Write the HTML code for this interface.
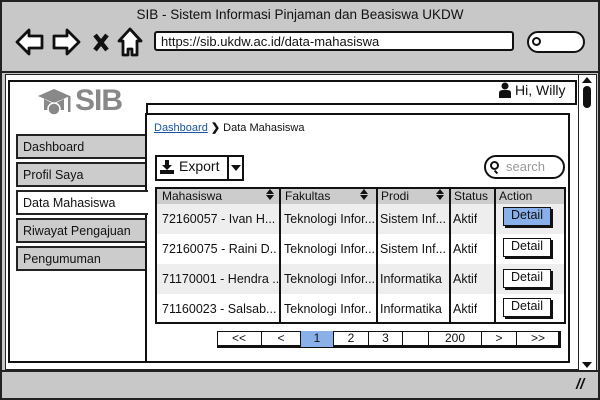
<!DOCTYPE html><html><head><style>
*{box-sizing:border-box;margin:0;padding:0}
body{width:600px;height:400px;background:#fff;font-family:"Liberation Sans",sans-serif;font-size:12px;color:#111;position:relative;overflow:hidden}
.a{position:absolute}
.b{border:2px solid #111}
.nav{position:absolute;left:16px;width:131px;height:25px;border:2px solid #222;background:#ccc;font-size:12.5px;padding:4px 5px}
.th{position:absolute;top:188px;height:16px;font-size:12px;padding:1px 4px}
.cell{position:absolute;font-size:12.5px;white-space:nowrap;overflow:hidden}
.det{position:absolute;left:503px;width:48px;height:19px;border:1.5px solid #111;box-shadow:2px 2px 0 #111;background:#fff;text-align:center;font-size:12.5px;line-height:15px}
.pg{position:absolute;top:331px;height:16px;border-left:1.5px solid #111;text-align:center;font-size:12px;line-height:14px}
.srt{position:absolute;width:0;height:0;border-left:4px solid transparent;border-right:4px solid transparent}
</style></head><body>
<div class="a" style="left:0;top:0;width:600px;height:400px;background:#c8c8c8;border:2px solid #222"></div>
<div class="a" style="left:0;top:7px;width:600px;text-align:center;font-size:13.5px">SIB - Sistem Informasi Pinjaman dan Beasiswa UKDW</div>
<svg class="a" style="left:0;top:0" width="150" height="70" viewBox="0 0 150 70" fill="#fff" stroke="#111" stroke-width="2.8" stroke-linejoin="round">
<path d="M17 42 L29 30 L29 36 L42 36 L42 48 L29 48 L29 54Z"/>
<path d="M79 42 L67 30 L67 36 L54 36 L54 48 L67 48 L67 54Z"/>
<path d="M95 35 L107 50 M107 35 L95 50" stroke-width="4.5"/>
<path d="M119 41 L130 29 L141 41 L137 41 L137 55 L132 55 L132 49 L128 49 L128 55 L123 55 L123 41Z"/>
</svg>
<div class="a b" style="left:154px;top:31px;width:360px;height:20px;background:#fff;border-radius:3px;font-size:13px;padding:1px 5px">https://sib.ukdw.ac.id/data-mahasiswa</div>
<div class="a b" style="left:527px;top:31px;width:58px;height:22px;background:#fff;border-radius:11px"></div>
<div class="a" style="left:532px;top:37px;width:9px;height:9px;border:2px solid #111;border-radius:50%"></div>
<div class="a" style="left:2px;top:71px;width:596px;height:2px;background:#222"></div>
<div class="a" style="left:5px;top:74px;width:592px;height:296px;background:#fff;border:1.5px solid #222"></div>
<div class="a" style="left:2px;top:370px;width:596px;height:2px;background:#222"></div>
<div class="a" style="left:578px;top:75px;width:18px;height:295px;border-left:1.5px solid #222;background:#fff"></div>
<div class="a" style="left:582px;top:77px;width:0;height:0;border-left:5px solid transparent;border-right:5px solid transparent;border-bottom:6px solid #111"></div>
<div class="a" style="left:583px;top:86px;width:8px;height:22px;background:#111;border-radius:4px"></div>
<div class="a" style="left:582px;top:362px;width:0;height:0;border-left:5px solid transparent;border-right:5px solid transparent;border-top:6px solid #111"></div>
<div class="a" style="left:576px;top:376px;font-size:15px;font-weight:bold;font-style:italic">//</div>
<!-- left panel -->
<div class="a b" style="left:8px;top:80px;width:140px;height:283px;background:#fff"></div>
<svg class="a" style="left:36px;top:88px" width="40" height="30" viewBox="0 0 40 30" fill="#888"><path d="M2 8 L18 1 L34 8 L18 15Z"/><path d="M8 11 L8 22 L28 22 L28 11 L18 16Z"/><circle cx="18" cy="21" r="6" fill="#888" stroke="#fff" stroke-width="1.5"/><rect x="32" y="8" width="2.5" height="16"/></svg>
<div class="a" style="left:75px;top:84px;font-size:30px;font-weight:bold;color:#888;letter-spacing:-1px">SIB</div>
<div class="nav" style="top:134px">Dashboard</div>
<div class="nav" style="top:162px">Profil Saya</div>
<div class="nav" style="top:246px">Pengumuman</div>
<!-- top bar -->
<div class="a b" style="left:146px;top:80px;width:431px;height:25px;background:#fff;border-left:none"></div>
<svg class="a" style="left:499px;top:82px" width="12" height="16" viewBox="0 0 12 16" fill="#111"><circle cx="6" cy="4" r="3.5"/><path d="M0 16 L0 11 Q0 8 4 8 L8 8 Q12 8 12 11 L12 16Z"/></svg>
<div class="a" style="left:515px;top:82px;font-size:14px">Hi, Willy</div>
<!-- main -->
<div class="a b" style="left:145px;top:113px;width:425px;height:250px;background:#fff"></div>
<div class="nav" style="top:190px;background:#fff;border-right:none;width:132px">Data Mahasiswa</div>
<div class="nav" style="top:218px">Riwayat Pengajuan</div>
<div class="a" style="left:154px;top:121px;font-size:11px"><span style="color:#1a56a0;text-decoration:underline">Dashboard</span> <b>❯</b> Data Mahasiswa</div>
<div class="a b" style="left:155px;top:155px;width:89px;height:26px;background:#fff"></div>
<div class="a" style="left:227px;top:155px;width:2px;height:26px;background:#111"></div>
<svg class="a" style="left:159px;top:159px" width="16" height="16" viewBox="0 0 16 16" fill="#111"><path d="M6 1 L10 1 L10 6 L13 6 L8 11 L3 6 L6 6Z"/><rect x="1" y="11" width="14" height="4"/></svg>
<div class="a" style="left:179px;top:158px;font-size:14px">Export</div>
<div class="a" style="left:231px;top:165px;border-left:5px solid transparent;border-right:5px solid transparent;border-top:6px solid #111"></div>
<div class="a b" style="left:484px;top:155px;width:81px;height:24px;border-radius:12px;background:#fff"></div>
<div class="a" style="left:490px;top:161px;width:9px;height:9px;border:2px solid #111;border-radius:50%"></div>
<div class="a" style="left:495px;top:170px;width:2px;height:4px;background:#111;transform:rotate(-45deg)"></div>
<div class="a" style="left:506px;top:159px;font-size:13px;color:#999">search</div>
<!-- table -->
<div class="a b" style="left:155px;top:187px;width:411px;height:137px;background:#fff"></div>
<div class="a" style="left:157px;top:189px;width:407px;height:15px;background:#ccc"></div>
<div class="a" style="left:157px;top:204px;width:407px;height:30px;background:#eee"></div>
<div class="a" style="left:157px;top:264px;width:407px;height:30px;background:#eee"></div>
<div class="a" style="left:279px;top:189px;width:2px;height:134px;background:#111"></div>
<div class="a" style="left:376px;top:189px;width:2px;height:134px;background:#111"></div>
<div class="a" style="left:449px;top:189px;width:2px;height:134px;background:#111"></div>
<div class="a" style="left:494px;top:189px;width:2px;height:134px;background:#111"></div>
<div class="th" style="left:158px">Mahasiswa</div>
<div class="th" style="left:281px">Fakultas</div>
<div class="th" style="left:377px">Prodi</div>
<div class="th" style="left:450px">Status</div>
<div class="th" style="left:495px">Action</div>
<div class="srt" style="left:266px;top:189px;border-bottom:5px solid #111"></div><div class="srt" style="left:266px;top:195px;border-top:5px solid #111"></div>
<div class="srt" style="left:360px;top:189px;border-bottom:5px solid #111"></div><div class="srt" style="left:360px;top:195px;border-top:5px solid #111"></div>
<div class="srt" style="left:436px;top:189px;border-bottom:5px solid #111"></div><div class="srt" style="left:436px;top:195px;border-top:5px solid #111"></div>
<div class="cell" style="left:162px;top:212px;width:116px">72160057 - Ivan H...</div>
<div class="cell" style="left:162px;top:242px;width:116px">72160075 - Raini D..</div>
<div class="cell" style="left:162px;top:272px;width:116px">71170001 - Hendra ..</div>
<div class="cell" style="left:162px;top:302px;width:116px">71160023 - Salsab...</div>
<div class="cell" style="left:284px;top:212px;width:92px">Teknologi Infor...</div>
<div class="cell" style="left:284px;top:242px;width:92px">Teknologi Infor...</div>
<div class="cell" style="left:284px;top:272px;width:92px">Teknologi Infor...</div>
<div class="cell" style="left:284px;top:302px;width:92px">Teknologi Infor..</div>
<div class="cell" style="left:380px;top:212px">Sistem Inf...</div>
<div class="cell" style="left:380px;top:242px">Sistem Inf...</div>
<div class="cell" style="left:380px;top:272px">Informatika</div>
<div class="cell" style="left:380px;top:302px">Informatika</div>
<div class="cell" style="left:453px;top:212px">Aktif</div>
<div class="cell" style="left:453px;top:242px">Aktif</div>
<div class="cell" style="left:453px;top:272px">Aktif</div>
<div class="cell" style="left:453px;top:302px">Aktif</div>
<div class="det" style="top:207px;background:#8ab0ea">Detail</div>
<div class="det" style="top:238px">Detail</div>
<div class="det" style="top:269px">Detail</div>
<div class="det" style="top:298px">Detail</div>
<!-- pagination -->
<div class="a" style="left:217px;top:331px;width:344px;height:17px;border:1.5px solid #111;border-bottom-width:3px;border-right-width:3px;background:#fff"></div>
<div class="pg" style="left:217px;width:44px;border-left:none">&lt;&lt;</div>
<div class="pg" style="left:261px;width:39px">&lt;</div>
<div class="pg" style="left:300px;width:33px;background:#8ab0ea">1</div>
<div class="pg" style="left:333px;width:35px">2</div>
<div class="pg" style="left:368px;width:34px">3</div>
<div class="pg" style="left:402px;width:26px"></div>
<div class="pg" style="left:428px;width:53px">200</div>
<div class="pg" style="left:481px;width:35px">&gt;</div>
<div class="pg" style="left:516px;width:43px">&gt;&gt;</div>
</body></html>
